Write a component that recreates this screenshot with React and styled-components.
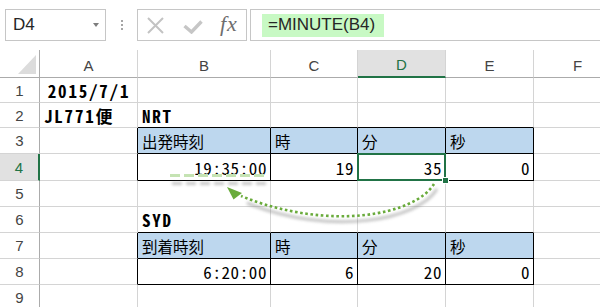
import React from 'react';
import styled, { createGlobalStyle } from 'styled-components';

const GlobalStyle = createGlobalStyle`
  html, body {
    margin: 0;
    padding: 0;
    background: #fff;
  }
  body {
    width: 600px;
    height: 307px;
    overflow: hidden;
    font-family: "Liberation Sans", Arial, sans-serif;
  }
`;

const GREEN = '#217346';
const GRID = '#d4d4d4';
const HEAD_LINE = '#ababab';

const Page = styled.div`
  position: relative;
  width: 600px;
  height: 307px;
  overflow: hidden;
  background: #fff;
`;

// 수식 입력줄
const FormulaBar = styled.div`
  display: flex;
  align-items: flex-start;
  height: 50px;
  padding: 9px 0 0 5px;
  box-sizing: border-box;
`;

const NameBox = styled.div`
  display: flex;
  align-items: center;
  width: 101px;
  height: 32px;
  box-sizing: border-box;
  border: 1px solid #c6c6c6;
  padding: 0 6px 0 7px;
  font-size: 17px;
  color: #262626;
`;

const Caret = styled.span`
  margin-left: auto;
  width: 0;
  height: 0;
  border-left: 3.5px solid transparent;
  border-right: 3.5px solid transparent;
  border-top: 4px solid #7d7d7d;
`;

const Grip = styled.div`
  width: 31px;
  height: 32px;
  display: flex;
  flex-direction: column;
  align-items: center;
  justify-content: center;
  gap: 2.3px;
`;

const GripDot = styled.span`
  width: 2px;
  height: 2px;
  background: #a6a6a6;
`;

const ButtonBox = styled.div`
  display: flex;
  align-items: center;
  width: 110px;
  height: 32px;
  box-sizing: border-box;
  border: 1px solid #c6c6c6;
  padding-left: 9px;
  gap: 19px;
`;

const Fx = styled.span`
  font-family: "Liberation Serif", "Times New Roman", serif;
  font-style: italic;
  font-size: 22px;
  letter-spacing: 1px;
  color: #6e6e6e;
  margin-left: -2px;
  line-height: 1;
  padding-bottom: 2px;
`;

const FormulaInput = styled.div`
  display: flex;
  align-items: center;
  flex: 1;
  height: 32px;
  margin-left: 3px;
  margin-right: -4px;
  box-sizing: border-box;
  border: 1px solid #c6c6c6;
  padding-left: 11px;
`;

const FormulaText = styled.span`
  display: flex;
  align-items: center;
  height: 23px;
  padding: 0 9px 0 6px;
  background: #c8f9c4;
  font-size: 17px;
  color: #262626;
`;

// 시트 그리드
const Sheet = styled.div`
  display: grid;
  grid-template-columns: 40px 98px 133px 87px 88px 88px 88px;
  grid-template-rows: 28px 25px 25px 26px 27px 26px 26px 26px 26px 26px;
`;

const Corner = styled.div`
  position: relative;
  border-right: 1px solid ${HEAD_LINE};
  border-bottom: 1px solid ${HEAD_LINE};
`;

const CornerTriangle = styled.span`
  position: absolute;
  right: 3px;
  bottom: 3px;
  width: 0;
  height: 0;
  border-left: 18px solid transparent;
  border-bottom: 19px solid #dcdcdc;
`;

const ColHead = styled.div`
  display: flex;
  align-items: center;
  justify-content: center;
  padding-top: 3px;
  box-sizing: border-box;
  font-size: 15px;
  color: ${(p) => (p.$active ? GREEN : '#444')};
  background: ${(p) => (p.$active ? '#e1e1e1' : '#fff')};
  border-right: 1px solid ${GRID};
  border-bottom: ${(p) => (p.$active ? `2px solid ${GREEN}` : `1px solid ${HEAD_LINE}`)};
`;

const RowHead = styled.div`
  display: flex;
  align-items: center;
  justify-content: center;
  box-sizing: border-box;
  font-size: 15px;
  color: ${(p) => (p.$active ? GREEN : '#444')};
  background: ${(p) => (p.$active ? '#e1e1e1' : '#fff')};
  border-right: ${(p) => (p.$active ? `2px solid ${GREEN}` : `1px solid ${HEAD_LINE}`)};
  border-bottom: 1px solid ${GRID};
`;

const Cell = styled.div`
  position: relative;
  display: flex;
  align-items: center;
  justify-content: ${(p) =>
    p.$align === 'right' ? 'flex-end' : p.$align === 'center' ? 'center' : 'flex-start'};
  box-sizing: border-box;
  padding: 0 3px 0 4px;
  background: ${(p) => p.$bg || '#fff'};
  border-right: 1px solid ${(p) => (p.$blackRight ? '#000' : GRID)};
  border-bottom: 1px solid ${(p) => (p.$blackBottom ? '#000' : GRID)};
  font-family: "Noto Sans CJK JP", sans-serif;
  font-feature-settings: "hwid" 1;
  font-size: ${(p) => p.$size}px;
  font-weight: ${(p) => (p.$bold ? 700 : 400)};
  letter-spacing: ${(p) => p.$spacing}px;
  color: #000;
  white-space: nowrap;
`;

const Selection = styled.span`
  position: absolute;
  top: -1px;
  left: -1px;
  right: -1px;
  bottom: -1px;
  border: 2px solid ${GREEN};
  z-index: 2;
  pointer-events: none;
`;

const FillHandle = styled.span`
  position: absolute;
  right: -4px;
  bottom: -4px;
  width: 5px;
  height: 5px;
  background: ${GREEN};
  box-shadow: 0 0 0 1px #fff;
`;

const Overlay = styled.svg`
  position: absolute;
  left: 0;
  top: 0;
  pointer-events: none;
  z-index: 3;
`;

const columns = ['A', 'B', 'C', 'D', 'E', 'F'];
const tableCols = ['B', 'C', 'D', 'E'];
const tableRows = [3, 4, 7, 8];
const headRows = [3, 7];

const content = {
  A1: { text: '2015/7/1', bold: true, align: 'center' },
  A2: { text: 'JL771便', bold: true },
  B2: { text: 'NRT', bold: true },
  B3: { text: '出発時刻' },
  C3: { text: '時' },
  D3: { text: '分' },
  E3: { text: '秒' },
  B4: { text: '19:35:00', align: 'right' },
  C4: { text: '19', align: 'right' },
  D4: { text: '35', align: 'right' },
  E4: { text: '0', align: 'right' },
  B6: { text: 'SYD', bold: true },
  B7: { text: '到着時刻' },
  C7: { text: '時' },
  D7: { text: '分' },
  E7: { text: '秒' },
  B8: { text: '6:20:00', align: 'right' },
  C8: { text: '6', align: 'right' },
  D8: { text: '20', align: 'right' },
  E8: { text: '0', align: 'right' },
};

const isTable = (r, c) => tableRows.includes(r) && tableCols.includes(c);

// 글꼴 크기와 자간
const styleFor = (item) => {
  if (!item) return { size: 15.5, spacing: 0 };
  if (item.bold) return { size: 17, spacing: 1.8 };
  if (/^[0-9:/]+$/.test(item.text)) return { size: 17, spacing: 0.6 };
  return { size: 15.5, spacing: 0 };
};

const Arrow = () => (
  <Overlay width="600" height="307" viewBox="0 0 600 307">
    <defs>
      <filter id="soft" x="-20%" y="-50%" width="140%" height="200%">
        <feGaussianBlur stdDeviation="1.4" />
      </filter>
    </defs>
    <g filter="url(#soft)" opacity="0.45">
      <line x1="172" y1="183.5" x2="266" y2="183.5" stroke="#7a7a7a" strokeWidth="3" strokeDasharray="10 4" />
      <path d="M437 189 C418 220, 332 237, 247 203" fill="none" stroke="#7a7a7a" strokeWidth="3" />
    </g>
    <line x1="170" y1="175.5" x2="266" y2="175.5" stroke="#c5e3b3" strokeWidth="3" strokeDasharray="10 4" />
    <path
      d="M434 184 C415 215, 330 232, 241 196"
      fill="none"
      stroke="#6aab3c"
      strokeWidth="2.6"
      strokeDasharray="2.6 2.6"
    />
    <polygon points="227,187 242,193 233.5,199.5" fill="#6aab3c" />
  </Overlay>
);

export default function App() {
  return (
    <Page>
      <GlobalStyle />
      <FormulaBar>
        <NameBox>
          D4
          <Caret />
        </NameBox>
        <Grip>
          <GripDot />
          <GripDot />
          <GripDot />
        </Grip>
        <ButtonBox>
          <svg width="17" height="17" viewBox="0 0 17 17">
            <path d="M1 1 L16 16 M16 1 L1 16" stroke="#c3c3c3" strokeWidth="2" fill="none" />
          </svg>
          <svg width="20" height="14" viewBox="0 0 20 14" style={{ marginTop: 4 }}>
            <path d="M1.5 6 L8.5 12 L18.5 1.5" stroke="#c6c6c6" strokeWidth="3.4" fill="none" />
          </svg>
          <Fx>fx</Fx>
        </ButtonBox>
        <FormulaInput>
          <FormulaText>=MINUTE(B4)</FormulaText>
        </FormulaInput>
      </FormulaBar>

      <Sheet>
        <Corner>
          <CornerTriangle />
        </Corner>
        {columns.map((c) => (
          <ColHead key={c} $active={c === 'D'}>
            {c}
          </ColHead>
        ))}
        {[1, 2, 3, 4, 5, 6, 7, 8, 9].map((r) => (
          <React.Fragment key={r}>
            <RowHead $active={r === 4}>{r}</RowHead>
            {columns.map((c) => {
              const item = content[c + r];
              const { size, spacing } = styleFor(item);
              const blackRight = isTable(r, c) || (c === 'A' && tableRows.includes(r));
              const blackBottom = isTable(r, c) || ((r === 2 || r === 6) && tableCols.includes(c));
              const bg = headRows.includes(r) && tableCols.includes(c) ? '#bdd7ee' : undefined;
              return (
                <Cell
                  key={c + r}
                  $align={item?.align}
                  $bold={item?.bold}
                  $size={size}
                  $spacing={spacing}
                  $blackRight={blackRight}
                  $blackBottom={blackBottom}
                  $bg={bg}
                >
                  {item?.text}
                  {c + r === 'D4' && (
                    <Selection>
                      <FillHandle />
                    </Selection>
                  )}
                </Cell>
              );
            })}
          </React.Fragment>
        ))}
      </Sheet>
      <Arrow />
    </Page>
  );
}
